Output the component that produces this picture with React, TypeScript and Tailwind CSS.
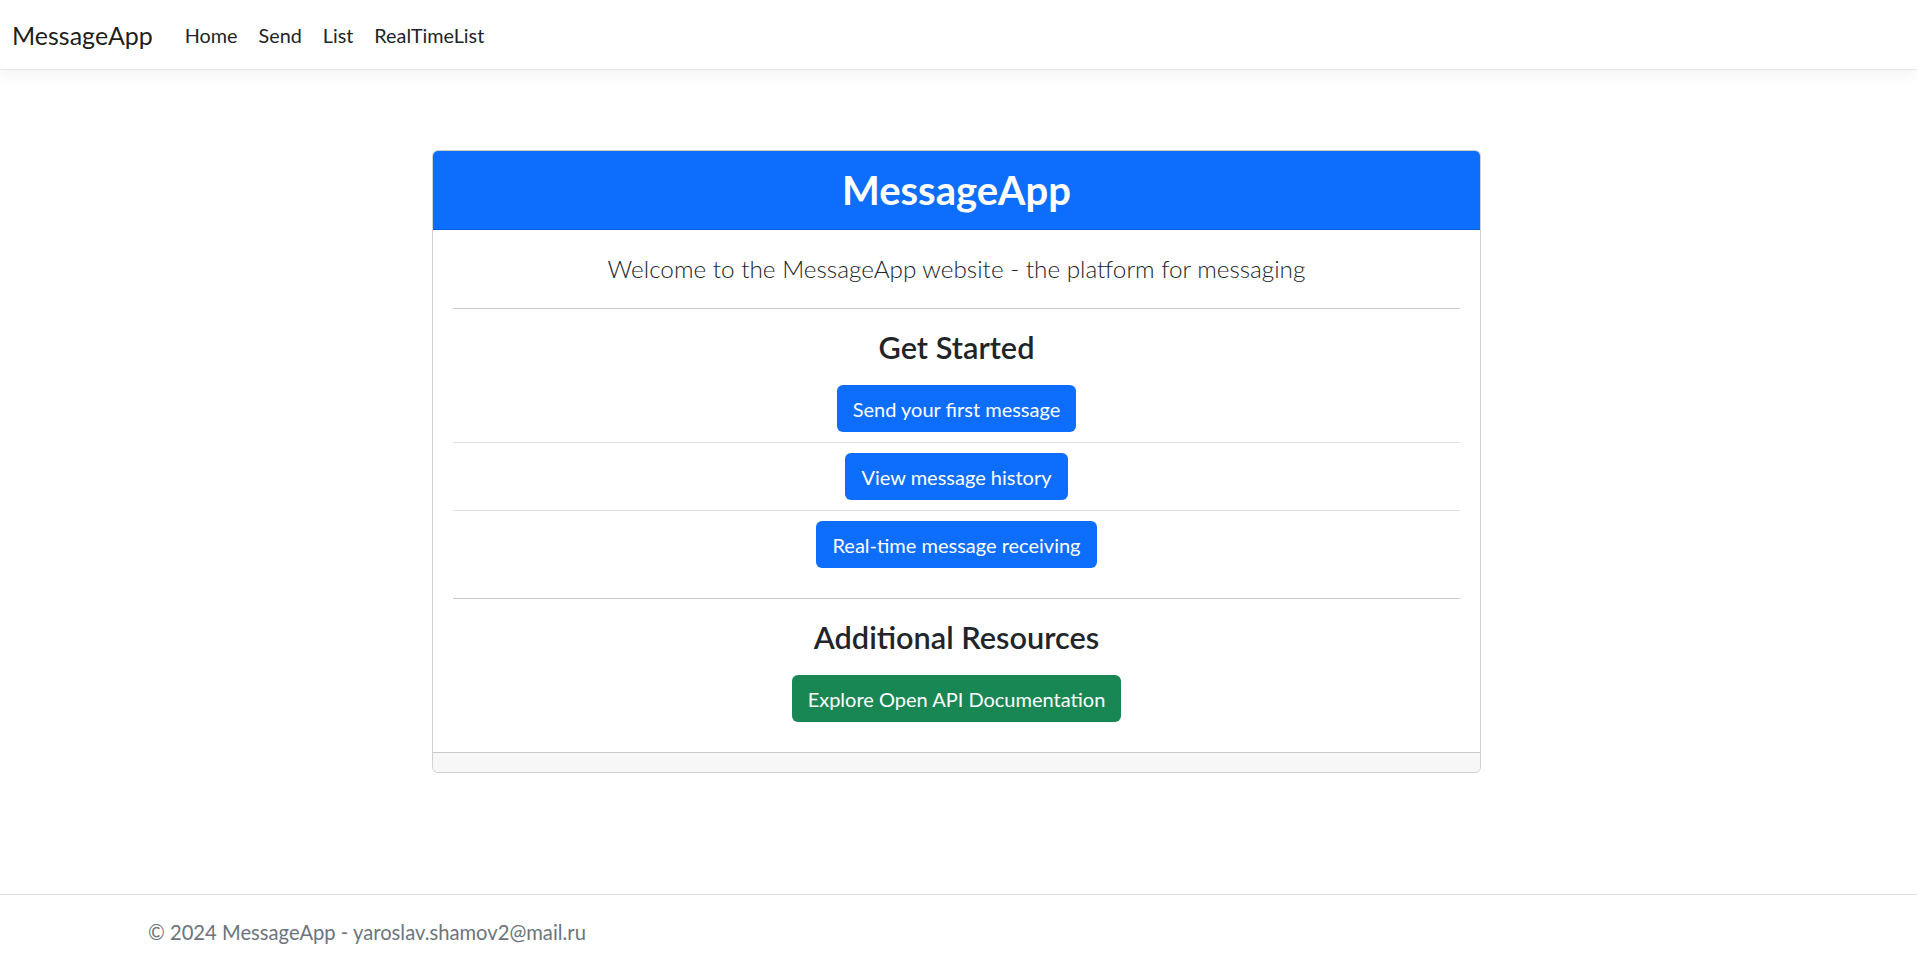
import React from 'react';

const font = { fontFamily: 'Lato, "Noto Sans", sans-serif' };

export default function App() {
  const navLinks = ['Home', 'Send', 'List', 'RealTimeList'];
  const startButtons = ['Send your first message', 'View message history', 'Real-time message receiving'];

  return (
    <div className="min-h-screen bg-white text-[#212529]" style={font}>
      {/* Top navbar */}
      <header className="h-[70px] border-b border-[#e5e5e5] bg-white shadow-[0_5px_15px_rgba(0,0,0,0.05)]">
        <nav className="flex h-[69px] items-center pl-[12px]">
          <a className="mr-[32px] text-[25px] leading-[30px] text-black/90">MessageApp</a>
          <ul className="flex items-center gap-[21px]">
            {navLinks.map((link) => (
              <li key={link}>
                <a className="text-[19.8px] leading-[30px] text-[#212529]">{link}</a>
              </li>
            ))}
          </ul>
        </nav>
      </header>

      {/* Main card */}
      <main className="pt-[80px] pb-[121px] pr-1">
        <div className="mx-auto w-[1049px] overflow-hidden rounded-md border border-black/[0.18] bg-white">
          <div className="border-b border-[#0b5ed7] bg-[#0d6efd] py-[15px] text-center">
            <h1 className="text-[40px] font-bold leading-[48px] text-white">MessageApp</h1>
          </div>

          <div className="px-5 pt-5 pb-[30px] text-center">
            <p className="text-[24.3px] font-light leading-[38px]">
              Welcome to the MessageApp website - the platform for messaging
            </p>

            <hr className="mt-5 mb-[21px] border-t border-[#c8c9ca]" />

            <h4 className="mb-[19px] text-[30.7px] font-semibold leading-[36px]">Get Started</h4>
            <ul>
              {startButtons.map((label, i) => (
                <li
                  key={label}
                  className={
                    i === 0
                      ? 'pb-2.5 border-b border-[#dee2e6]'
                      : i === startButtons.length - 1
                      ? 'pt-2.5 pb-2.5'
                      : 'py-2.5 border-b border-[#dee2e6]'
                  }
                >
                  <a className="inline-flex h-[47px] items-center rounded-[6px] bg-[#0d6efd] px-4 text-[20px] text-white">
                    {label}
                  </a>
                </li>
              ))}
            </ul>

            <hr className="mt-5 mb-[21px] border-t border-[#c8c9ca]" />

            <h4 className="mb-[19px] text-[30.7px] font-semibold leading-[36px]">Additional Resources</h4>
            <a className="inline-flex h-[47px] items-center rounded-[6px] bg-[#198754] px-4 text-[20px] text-white">
              Explore Open API Documentation
            </a>
          </div>

          <div className="h-[20px] border-t border-black/[0.18] bg-[#f7f7f7]" />
        </div>
      </main>

      {/* Footer */}
      <footer className="border-t border-[#dee2e6]">
        <div className="pl-[148px] text-[20.2px] leading-[75px] text-[#6c757d]">
          © 2024 MessageApp - yaroslav.shamov2@mail.ru
        </div>
      </footer>
    </div>
  );
}
